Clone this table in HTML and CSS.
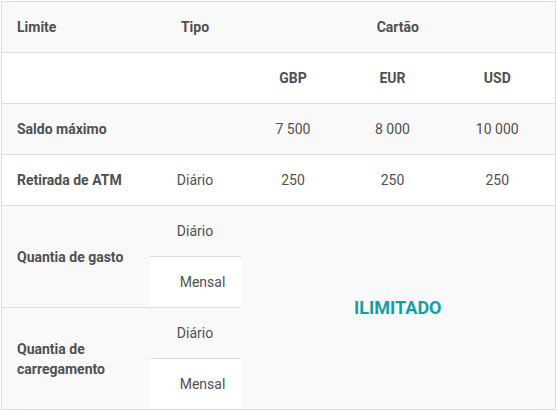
FILE: index.html
```html
<!DOCTYPE html>
<html lang="pt">
<head>
<meta charset="utf-8">
<link rel="stylesheet" href="styles.css">
</head>
<body>
<div class="wrap">
<table class="limits">
  <colgroup>
    <col class="c-limit">
    <col class="c-type">
    <col class="c-gbp">
    <col class="c-eur">
    <col class="c-usd">
  </colgroup>
  <tr class="row-gray">
    <th class="left">Limite</th>
    <th>Tipo</th>
    <th colspan="3">Cartão</th>
  </tr>
  <tr class="row-white">
    <th></th>
    <th></th>
    <th>GBP</th>
    <th>EUR</th>
    <th>USD</th>
  </tr>
  <tr class="row-gray">
    <th class="left">Saldo máximo</th>
    <td></td>
    <td>7 500</td>
    <td>8 000</td>
    <td>10 000</td>
  </tr>
  <tr class="row-white">
    <th class="left">Retirada de ATM</th>
    <td>Diário</td>
    <td>250</td>
    <td>250</td>
    <td>250</td>
  </tr>
  <tr class="row-gray">
    <th class="left" rowspan="2">Quantia de gasto</th>
    <td class="sub">Diário</td>
    <td class="unlimited" rowspan="4" colspan="3">ILIMITADO</td>
  </tr>
  <tr class="row-gray">
    <td class="sub mensal">Mensal</td>
  </tr>
  <tr class="row-gray">
    <th class="left" rowspan="2">Quantia de<br>carregamento</th>
    <td class="sub">Diário</td>
  </tr>
  <tr class="row-gray">
    <td class="sub mensal">Mensal</td>
  </tr>
</table>
</div>
</body>
</html>
```

FILE: styles.css
```css
html, body {
  margin: 0;
  padding: 0;
  background: #ffffff;
}

.wrap {
  padding: 1px;
}

.limits {
  border-collapse: collapse;
  table-layout: fixed;
  width: 555px;
  border: 1px solid #d7dfe5;
  font-family: Roboto, "Liberation Sans", sans-serif;
  font-size: 14px;
  color: #505050;
}

.c-limit { width: 148px; }
.c-type { width: 91px; }
.c-gbp { width: 105px; }
.c-eur { width: 94px; }
.c-usd { width: 116px; }

.limits th,
.limits td {
  height: 50px;
  padding: 0;
  text-align: center;
  vertical-align: middle;
  border-bottom: 1px solid #d7dfe5;
  line-height: 20px;
}

.limits th {
  font-weight: 700;
}

.limits td {
  font-weight: 400;
}

.limits .left {
  text-align: left;
  padding-left: 15px;
}

.row-gray {
  background: #f9f9fa;
}

.row-white {
  background: #ffffff;
}

.limits .mensal {
  background: #ffffff;
  padding-left: 15px;
}

.limits .unlimited {
  color: #13a0a3;
  font-size: 18px;
  font-weight: 700;
}
```
